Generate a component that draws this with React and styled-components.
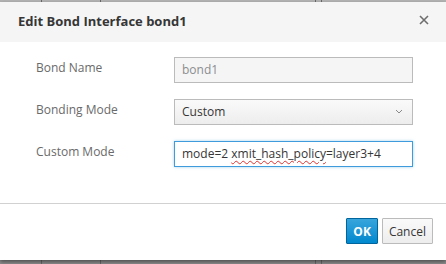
import styled, { createGlobalStyle } from "styled-components"

const GlobalStyle = createGlobalStyle`
  html, body {
    margin: 0;
    padding: 0;
    height: 264px;
    overflow: hidden;
    background: #9c9c9c;
    font-family: "Open Sans", "Liberation Sans", sans-serif;
    font-size: 12px;
  }
`

const Backdrop = styled.div`
  position: relative;
  height: 264px;
  padding-top: 2px;
  box-sizing: border-box;
  background: linear-gradient(#b4b4b4, #8e8e8e);
`

const BackLine = styled.span`
  position: absolute;
  top: 0;
  bottom: 0;
  width: 1px;
  background: #6a6a6a;
  left: ${p => p.x}px;
`

const Modal = styled.div`
  position: relative;
  width: 446px;
  height: 258px;
  background: #fff;
  box-shadow: 0 2px 4px rgba(0, 0, 0, 0.45);
  display: flex;
  flex-direction: column;
`

const Header = styled.div`
  height: 40px;
  background: #f5f5f5;
  display: flex;
  align-items: center;
  justify-content: space-between;
  padding: 0 16px 2px 18px;
  box-sizing: border-box;
`

const Title = styled.h4`
  margin: 0;
  font-size: 13px;
  font-weight: 700;
  color: #363636;
`

const Close = styled.button`
  border: 0;
  background: none;
  padding: 0;
  width: 12px;
  height: 12px;
  display: flex;
  margin-top: -2px;
`

const Body = styled.div`
  flex: 1;
  padding: 15px 33px 0 36px;
  display: grid;
  grid-template-columns: 138px 1fr;
  grid-auto-rows: 26px;
  row-gap: 16px;
  align-items: center;
`

const Label = styled.label`
  color: #6a6a6a;
  font-size: 12px;
  align-self: start;
  padding-top: 2px;
`

const Field = styled.div`
  height: 26px;
  box-sizing: border-box;
  border: 1px solid ${p => (p.focus ? "#3f9bdb" : "#bbb")};
  background: ${p =>
    p.disabled ? "#f5f5f5" : p.select ? "linear-gradient(#fafafa, #ededed)" : "#fff"};
  color: ${p => (p.disabled ? "#8b8d8f" : "#363636")};
  box-shadow: ${p => (p.focus ? "0 0 3px rgba(0, 136, 206, 0.35)" : "none")};
  display: flex;
  align-items: center;
  justify-content: space-between;
  padding: 0 9px 1px 7px;
  font-size: 12px;
  white-space: nowrap;
`

const Misspelled = styled.span`
  text-decoration: underline wavy #e03030;
  text-decoration-thickness: 1px;
  text-underline-offset: 2px;
`

const Footer = styled.div`
  height: 57px;
  border-top: 1px solid #d1d1d1;
  display: flex;
  justify-content: flex-end;
  align-items: flex-start;
  gap: 4px;
  padding: 14px 13px 0 0;
  box-sizing: border-box;
`

const Button = styled.button`
  height: 26px;
  box-sizing: border-box;
  font-family: "Open Sans", "Liberation Sans", sans-serif;
  font-size: 12px;
  padding: 0 6px;
  font-weight: ${p => (p.primary ? 700 : 400)};
  color: ${p => (p.primary ? "#fff" : "#363636")};
  border: 1px solid ${p => (p.primary ? "#00659c" : "#bbb")};
  background: ${p =>
    p.primary ? "linear-gradient(#39a5dc, #0088ce)" : "linear-gradient(#fafafa, #ededed)"};
  border-radius: 1px;
`

const Chevron = () => (
  <svg width="8" height="5" viewBox="0 0 8 5">
    <path d="M1 1 L4 4 L7 1" fill="none" stroke="#8a8a8a" strokeWidth="1" />
  </svg>
)

const CloseIcon = () => (
  <svg width="12" height="12" viewBox="0 0 12 12">
    <path d="M2 2 L10 10 M10 2 L2 10" stroke="#6e6e6e" strokeWidth="1.6" />
  </svg>
)

const App = () => {
  return (
    <Backdrop>
      <GlobalStyle />
      <BackLine x={41} />
      <BackLine x={100} />
      <BackLine x={315} />
      <BackLine x={321} />
      <Modal>
        <Header>
          <Title>Edit Bond Interface bond1</Title>
          <Close aria-label="Close">
            <CloseIcon />
          </Close>
        </Header>
        <Body>
          <Label>Bond Name</Label>
          <Field disabled>bond1</Field>
          <Label>Bonding Mode</Label>
          <Field select>
            Custom
            <Chevron />
          </Field>
          <Label>Custom Mode</Label>
          <Field focus>
            <span>
              mode=2 <Misspelled>xmit_hash_policy</Misspelled>=layer3+4
            </span>
          </Field>
        </Body>
        <Footer>
          <Button primary>OK</Button>
          <Button>Cancel</Button>
        </Footer>
      </Modal>
    </Backdrop>
  )
}

export default App
